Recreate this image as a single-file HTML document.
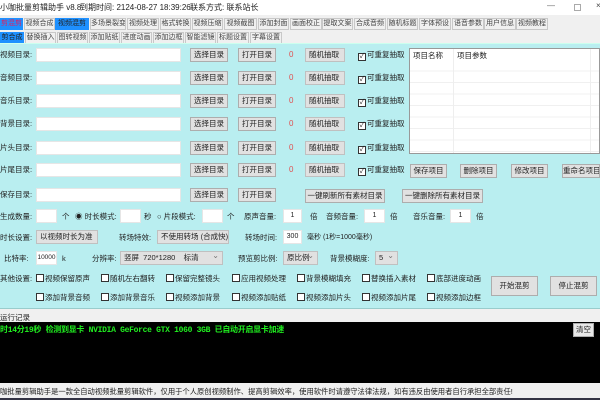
<!DOCTYPE html>
<html><head><meta charset="utf-8"><style>
*{margin:0;padding:0;box-sizing:border-box}
body{width:600px;height:400px;overflow:hidden;background:#f0f0f0;font-family:"Liberation Sans","Noto Sans CJK SC",sans-serif;font-size:8px;color:#222;position:relative}
div{white-space:nowrap}
.a{position:absolute}
.t{position:absolute;height:12px;border:1px solid #c8c8c8;background:#f0f0f0;font-size:7px;line-height:10px;text-align:center;color:#444;overflow:hidden}
.tb{background:#1e90ff;color:#222;border-color:#1e90ff}
.in{position:absolute;background:#fff;border:1px solid #e6e6e6;height:14px;font-size:7px;line-height:12px;text-align:center;overflow:hidden}
.bt{position:absolute;background:#e1e1e1;border:1px solid #adadad;height:14px;font-size:7.5px;line-height:12px;text-align:center;color:#222;overflow:hidden}
.sel{position:absolute;background:#e1e1e1;border:1px solid #c0c0c0;height:14px;font-size:7.5px;line-height:12px;padding-left:3px;overflow:hidden}
.sel:after{content:"⌄";position:absolute;right:3px;top:-2px;color:#777;font-size:8px}
.cb{position:absolute;font-size:7.5px;line-height:10px}
.cb i{display:inline-block;width:8px;height:8px;border:1px solid #333;background:#fff;vertical-align:-1px;margin-right:1px;font-style:normal;font-size:7px;line-height:6px;text-align:center}
.lb{position:absolute;font-size:7.5px;line-height:10px}
.r0{position:absolute;color:#e05050;font-size:8px}
</style></head><body>
<div class="a" style="left:0;top:0;width:600px;height:15px;background:#fff"></div>
<div class="a" style="left:0;top:2px;font-size:8px">小咖批量剪辑助手 v8.8</div>
<div class="a" style="left:80px;top:2px;font-size:8px">到期时间: 2124-08-27 18:39:26</div>
<div class="a" style="left:190px;top:2px;font-size:8px">联系方式: 联系站长</div>
<div class="a" style="left:547px;top:1px;color:#666">—</div>
<div class="a" style="left:574px;top:4px;width:7px;height:7px;border:1px solid #aaa"></div>
<div class="a" style="left:596px;top:1px;color:#444">×</div>

<div class="t tb" style="left:0;top:18px;width:23px;color:#e02060">剪混剪</div>
<div class="t" style="left:24px;top:18px;width:31px">视频合成</div>
<div class="t tb" style="left:55px;top:18px;width:34px">视频混剪</div>
<div class="t" style="left:90px;top:18px;width:36px">多场景裂变</div>
<div class="t" style="left:127px;top:18px;width:32px">视频处理</div>
<div class="t" style="left:160px;top:18px;width:31px">格式转换</div>
<div class="t" style="left:192px;top:18px;width:31px">视频压缩</div>
<div class="t" style="left:224px;top:18px;width:33px">视频截图</div>
<div class="t" style="left:258px;top:18px;width:31px">添加封面</div>
<div class="t" style="left:290px;top:18px;width:32px">画面校正</div>
<div class="t" style="left:322px;top:18px;width:31px">提取文案</div>
<div class="t" style="left:354px;top:18px;width:32px">合成音频</div>
<div class="t" style="left:387px;top:18px;width:31px">随机标题</div>
<div class="t" style="left:419px;top:18px;width:32px">字体预设</div>
<div class="t" style="left:452px;top:18px;width:32px">语音参数</div>
<div class="t" style="left:484px;top:18px;width:32px">用户信息</div>
<div class="t" style="left:516px;top:18px;width:32px">视频教程</div>

<div class="t tb" style="left:0;top:32px;width:24px">剪合成</div>
<div class="t" style="left:25px;top:32px;width:31px">替换插入</div>
<div class="t" style="left:57px;top:32px;width:31px">图转视频</div>
<div class="t" style="left:89px;top:32px;width:31px">添加贴纸</div>
<div class="t" style="left:121px;top:32px;width:31px">进度动画</div>
<div class="t" style="left:153px;top:32px;width:31px">添加边框</div>
<div class="t" style="left:185px;top:32px;width:31px">智能滤镜</div>
<div class="t" style="left:217px;top:32px;width:32px">标题设置</div>
<div class="t" style="left:250px;top:32px;width:32px">字幕设置</div>

<div class="a" style="left:0;top:43px;width:600px;height:265px;background:#b9eef0;border-top:1px solid #cfe"></div>

<div class="lb" style="left:0;top:50px">视频目录:</div>
<div class="lb" style="left:0;top:73px">音频目录:</div>
<div class="lb" style="left:0;top:96px">音乐目录:</div>
<div class="lb" style="left:0;top:119px">背景目录:</div>
<div class="lb" style="left:0;top:143px">片头目录:</div>
<div class="lb" style="left:0;top:165px">片尾目录:</div>
<div class="lb" style="left:0;top:190px">保存目录:</div>

<div class="in" style="left:36px;top:48px;width:145px"></div>
<div class="in" style="left:36px;top:71px;width:145px"></div>
<div class="in" style="left:36px;top:94px;width:145px"></div>
<div class="in" style="left:36px;top:117px;width:145px"></div>
<div class="in" style="left:36px;top:141px;width:145px"></div>
<div class="in" style="left:36px;top:163px;width:145px"></div>
<div class="in" style="left:36px;top:188px;width:145px"></div>

<div class="bt" style="left:190px;top:48px;width:38px">选择目录</div><div class="bt" style="left:238px;top:48px;width:38px">打开目录</div><div class="r0" style="left:289px;top:50px">0</div><div class="sel" style="left:305px;top:48px;width:40px">随机抽取</div><div class="cb" style="left:358px;top:50px"><i>✓</i>可重复抽取</div>
<div class="bt" style="left:190px;top:71px;width:38px">选择目录</div><div class="bt" style="left:238px;top:71px;width:38px">打开目录</div><div class="r0" style="left:289px;top:73px">0</div><div class="sel" style="left:305px;top:71px;width:40px">随机抽取</div><div class="cb" style="left:358px;top:73px"><i>✓</i>可重复抽取</div>
<div class="bt" style="left:190px;top:94px;width:38px">选择目录</div><div class="bt" style="left:238px;top:94px;width:38px">打开目录</div><div class="r0" style="left:289px;top:96px">0</div><div class="sel" style="left:305px;top:94px;width:40px">随机抽取</div><div class="cb" style="left:358px;top:96px"><i>✓</i>可重复抽取</div>
<div class="bt" style="left:190px;top:117px;width:38px">选择目录</div><div class="bt" style="left:238px;top:117px;width:38px">打开目录</div><div class="r0" style="left:289px;top:119px">0</div><div class="sel" style="left:305px;top:117px;width:40px">随机抽取</div><div class="cb" style="left:358px;top:119px"><i>✓</i>可重复抽取</div>
<div class="bt" style="left:190px;top:141px;width:38px">选择目录</div><div class="bt" style="left:238px;top:141px;width:38px">打开目录</div><div class="r0" style="left:289px;top:143px">0</div><div class="sel" style="left:305px;top:141px;width:40px">随机抽取</div><div class="cb" style="left:358px;top:143px"><i>✓</i>可重复抽取</div>
<div class="bt" style="left:190px;top:163px;width:38px">选择目录</div><div class="bt" style="left:238px;top:163px;width:38px">打开目录</div><div class="r0" style="left:289px;top:165px">0</div><div class="sel" style="left:305px;top:163px;width:40px">随机抽取</div><div class="cb" style="left:358px;top:165px"><i>✓</i>可重复抽取</div>
<div class="bt" style="left:190px;top:188px;width:38px">选择目录</div><div class="bt" style="left:238px;top:188px;width:38px">打开目录</div>

<div class="a" style="left:409px;top:48px;width:191px;height:106px;background:#fff;border:1px solid #999;
background-image:linear-gradient(#f0f0f0 1px,transparent 1px);background-size:100% 11.5px;background-position:0 10px"></div>
<div class="a" style="left:410px;top:49px;width:189px;height:12px;background:#fff"></div>
<div class="a" style="left:453px;top:49px;width:1px;height:104px;background:#eee"></div>
<div class="a" style="left:590px;top:49px;width:1px;height:104px;background:#eee"></div>
<div class="lb" style="left:413px;top:51px;font-size:7.5px">项目名称</div>
<div class="lb" style="left:457px;top:51px;font-size:7.5px">项目参数</div>

<div class="bt" style="left:410px;top:164px;width:37px">保存项目</div>
<div class="bt" style="left:460px;top:164px;width:37px">删除项目</div>
<div class="bt" style="left:511px;top:164px;width:37px">修改项目</div>
<div class="bt" style="left:562px;top:164px;width:38px">重命名项目</div>
<div class="bt" style="left:305px;top:189px;width:80px">一键刷新所有素材目录</div>
<div class="bt" style="left:402px;top:189px;width:81px">一键删除所有素材目录</div>

<div class="lb" style="left:0;top:212px">生成数量:</div>
<div class="in" style="left:36px;top:209px;width:21px"></div>
<div class="lb" style="left:62px;top:212px">个</div>
<div class="lb" style="left:75px;top:212px">◉ 时长模式:</div>
<div class="in" style="left:120px;top:209px;width:21px"></div>
<div class="lb" style="left:144px;top:212px">秒</div>
<div class="lb" style="left:157px;top:212px">○ 片段模式:</div>
<div class="in" style="left:202px;top:209px;width:21px"></div>
<div class="lb" style="left:227px;top:212px">个</div>
<div class="lb" style="left:244px;top:212px">原声音量:</div>
<div class="in" style="left:283px;top:209px;width:19px">1</div>
<div class="lb" style="left:310px;top:212px">倍</div>
<div class="lb" style="left:326px;top:212px">音频音量:</div>
<div class="in" style="left:364px;top:209px;width:21px">1</div>
<div class="lb" style="left:390px;top:212px">倍</div>
<div class="lb" style="left:413px;top:212px">音乐音量:</div>
<div class="in" style="left:450px;top:209px;width:21px">1</div>
<div class="lb" style="left:476px;top:212px">倍</div>

<div class="lb" style="left:0;top:233px">时长设置:</div>
<div class="sel" style="left:36px;top:230px;width:62px">以视频时长为准</div>
<div class="lb" style="left:119px;top:233px">转场特效:</div>
<div class="sel" style="left:157px;top:230px;width:72px">不使用转场 (合成快)</div>
<div class="lb" style="left:245px;top:233px">转场时间:</div>
<div class="in" style="left:283px;top:230px;width:19px">300</div>
<div class="lb" style="left:307px;top:233px;font-size:7px">毫秒 (1秒=1000毫秒)</div>

<div class="lb" style="left:4px;top:254px">比特率:</div>
<div class="in" style="left:36px;top:251px;width:21px;font-size:6.5px">10000</div>
<div class="lb" style="left:62px;top:254px">k</div>
<div class="lb" style="left:92px;top:254px">分辨率:</div>
<div class="sel" style="left:120px;top:251px;width:103px">竖屏&nbsp; 720*1280&nbsp;&nbsp;&nbsp; 标清</div>
<div class="lb" style="left:238px;top:254px">预览剪比例:</div>
<div class="sel" style="left:283px;top:251px;width:35px">原比例</div>
<div class="lb" style="left:330px;top:254px">背景模糊度:</div>
<div class="sel" style="left:375px;top:251px;width:23px">5</div>

<div class="lb" style="left:0;top:274px">其他设置:</div>
<div class="cb" style="left:36px;top:274px"><i></i>视频保留原声</div>
<div class="cb" style="left:101px;top:274px"><i></i>随机左右翻转</div>
<div class="cb" style="left:166px;top:274px"><i></i>保留完整镜头</div>
<div class="cb" style="left:232px;top:274px"><i></i>应用视频处理</div>
<div class="cb" style="left:297px;top:274px"><i></i>背景模糊填充</div>
<div class="cb" style="left:362px;top:274px"><i></i>替换插入素材</div>
<div class="cb" style="left:427px;top:274px"><i></i>底部进度动画</div>
<div class="cb" style="left:36px;top:293px"><i></i>添加背景音频</div>
<div class="cb" style="left:101px;top:293px"><i></i>添加背景音乐</div>
<div class="cb" style="left:166px;top:293px"><i></i>视频添加背景</div>
<div class="cb" style="left:232px;top:293px"><i></i>视频添加贴纸</div>
<div class="cb" style="left:297px;top:293px"><i></i>视频添加片头</div>
<div class="cb" style="left:362px;top:293px"><i></i>视频添加片尾</div>
<div class="cb" style="left:427px;top:293px"><i></i>视频添加边框</div>
<div class="bt" style="left:491px;top:276px;width:47px;height:20px;line-height:18px">开始混剪</div>
<div class="bt" style="left:550px;top:276px;width:47px;height:20px;line-height:18px">停止混剪</div>

<div class="a" style="left:0;top:308px;width:600px;height:1px;background:#9cc"></div>
<div class="lb" style="left:0;top:313px">运行记录</div>
<div class="a" style="left:0;top:322px;width:600px;height:61px;background:#000"></div>
<div class="a" style="left:0;top:324px;color:#20f020;font-weight:bold;font-size:8px;font-family:'Liberation Mono','Noto Sans CJK SC',monospace;letter-spacing:-0.3px">时14分19秒 检测到显卡 NVIDIA GeForce GTX 1060 3GB 已自动开启显卡加速</div>
<div class="bt" style="left:573px;top:323px;width:21px;height:14px;background:#e8e8e8">清空</div>
<div class="lb" style="left:0;top:387px;font-size:7.3px">咖批量剪辑助手是一款全自动视频批量剪辑软件，仅用于个人原创视频制作、提高剪辑效率，使用软件时请遵守法律法规，如有违反由使用者自行承担全部责任!</div>
<div class="a" style="left:0;top:398px;width:600px;height:2px;background:#334"></div>
</body></html>
